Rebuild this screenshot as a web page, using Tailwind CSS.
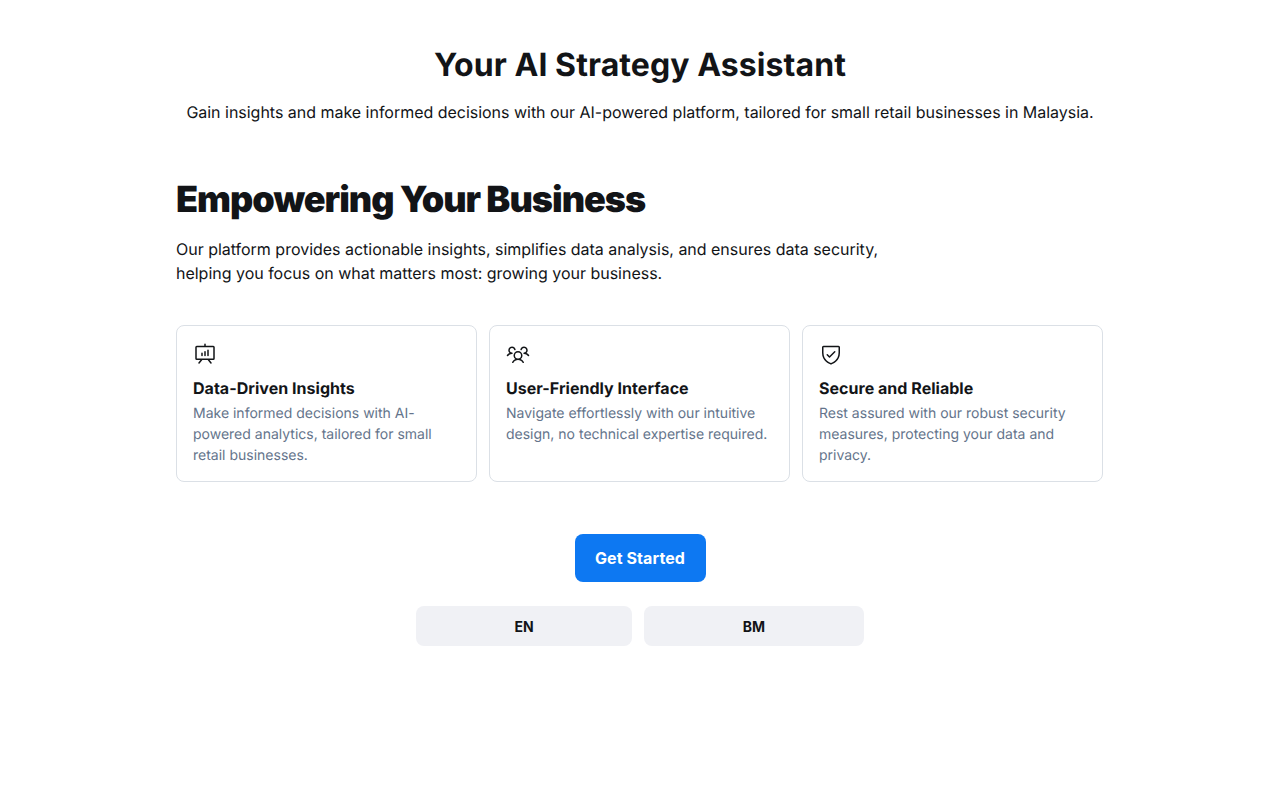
<!DOCTYPE html>
<html lang="en">
<head>
<meta charset="utf-8">
<title>AI Strategy Assistant</title>
<script src="https://cdn.jsdelivr.net/npm/@tailwindcss/browser@4"></script>
</head>
<body class="bg-white font-['Inter','Noto_Sans',sans-serif] text-[#121417] antialiased [text-rendering:geometricPrecision]">
<div class="flex min-h-screen flex-col overflow-x-hidden">
<div class="flex flex-1 justify-center px-40 py-5">
<div class="flex max-w-[960px] flex-1 flex-col">
<h1 class="px-4 pt-[25px] pb-[11px] text-center text-[32px] leading-tight font-bold tracking-[0.08px]">Your AI Strategy Assistant</h1>
<p class="px-4 pt-1 pb-3 text-center text-base leading-normal tracking-[-0.02px]">Gain insights and make informed decisions with our AI-powered platform, tailored for small retail businesses in Malaysia.</p>
<section class="flex flex-col gap-10 px-4 pt-[41px] pb-10">
<div class="flex flex-col gap-[15px]">
<h2 class="max-w-[720px] text-4xl leading-tight font-black tracking-[-0.99px]">Empowering Your Business</h2>
<p class="max-w-[720px] text-base leading-normal tracking-[-0.015px]">Our platform provides actionable insights, simplifies data analysis, and ensures data security, helping you focus on what matters most: growing your business.</p>
</div>
<div class="grid grid-cols-[301px_301px_301px] gap-3">
<article class="flex flex-col gap-3 rounded-lg border border-[#dbe0e6] bg-white px-4 pt-4 pb-[15px]">
<svg class="size-6" viewBox="0 0 256 256" fill="currentColor"><path d="M216,40H136V24a8,8,0,0,0-16,0V40H40A16,16,0,0,0,24,56V176a16,16,0,0,0,16,16H79.36L57.75,219a8,8,0,0,0,12.5,10l29.59-37h56.32l29.59,37a8,8,0,1,0,12.5-10l-21.61-27H216a16,16,0,0,0,16-16V56A16,16,0,0,0,216,40Zm0,136H40V56H216V176ZM104,120v24a8,8,0,0,1-16,0V120a8,8,0,0,1,16,0Zm32-16v40a8,8,0,0,1-16,0V104a8,8,0,0,1,16,0Zm32-16v56a8,8,0,0,1-16,0V88a8,8,0,0,1,16,0Z"/></svg>
<div class="flex flex-col gap-[5px]"><h3 class="text-base leading-tight font-bold tracking-[0.03px]">Data-Driven Insights</h3><p class="text-sm leading-normal text-[#64748b]">Make informed decisions with AI-powered analytics, tailored for small retail businesses.</p></div>
</article>
<article class="flex flex-col gap-3 rounded-lg border border-[#dbe0e6] bg-white px-4 pt-4 pb-[15px]">
<svg class="size-6" viewBox="0 0 256 256" fill="currentColor"><path d="M244.8,150.4a8,8,0,0,1-11.2-1.6A51.6,51.6,0,0,0,192,128a8,8,0,0,1-7.37-4.89,8,8,0,0,1,0-6.22A8,8,0,0,1,192,112a24,24,0,1,0-23.24-30,8,8,0,1,1-15.5-4A40,40,0,1,1,219,117.51a67.94,67.94,0,0,1,27.43,21.68A8,8,0,0,1,244.8,150.4ZM190.92,212a8,8,0,1,1-13.84,8,57,57,0,0,0-98.16,0,8,8,0,1,1-13.84-8,72.06,72.06,0,0,1,33.74-29.92,48,48,0,1,1,58.36,0A72.06,72.06,0,0,1,190.92,212ZM128,176a32,32,0,1,0-32-32A32,32,0,0,0,128,176ZM72,120a8,8,0,0,0-8-8A24,24,0,1,1,87.24,82a8,8,0,1,0,15.5-4A40,40,0,1,0,37,117.51,67.94,67.94,0,0,0,9.6,139.19a8,8,0,1,0,12.8,9.61A51.6,51.6,0,0,1,64,128,8,8,0,0,0,72,120Z"/></svg>
<div class="flex flex-col gap-[5px]"><h3 class="text-base leading-tight font-bold tracking-[0.03px]">User-Friendly Interface</h3><p class="text-sm leading-normal text-[#64748b]">Navigate effortlessly with our intuitive design, no technical expertise required.</p></div>
</article>
<article class="flex flex-col gap-3 rounded-lg border border-[#dbe0e6] bg-white px-4 pt-4 pb-[15px]">
<svg class="size-6" viewBox="0 0 256 256" fill="currentColor"><path d="M208,40H48A16,16,0,0,0,32,56v58.78c0,89.61,75.82,119.34,91,124.39a15.53,15.53,0,0,0,10,0c15.2-5.05,91-34.78,91-124.39V56A16,16,0,0,0,208,40Zm0,74.79c0,78.42-66.35,104.62-80,109.18-13.53-4.51-80-30.69-80-109.18V56H208ZM82.34,141.66a8,8,0,0,1,11.32-11.32L112,148.68l50.34-50.34a8,8,0,0,1,11.32,11.32l-56,56a8,8,0,0,1-11.32,0Z"/></svg>
<div class="flex flex-col gap-[5px]"><h3 class="text-base leading-tight font-bold tracking-[0.03px]">Secure and Reliable</h3><p class="text-sm leading-normal text-[#64748b]">Rest assured with our robust security measures, protecting your data and privacy.</p></div>
</article>
</div>
</section>
<div class="flex justify-center px-4 py-3"><button class="h-12 w-[131px] rounded-lg bg-[#0d78f2] text-base font-bold tracking-[0.08px] text-white">Get Started</button></div>
<div class="flex justify-center"><div class="flex w-[480px] gap-3 px-4 py-3"><button class="h-10 w-[216px] rounded-lg bg-[#f0f1f5] px-4 pt-px text-sm font-bold">EN</button><button class="h-10 w-[220px] rounded-lg bg-[#f0f1f5] px-4 pt-px text-sm font-bold">BM</button></div></div>
</div>
</div>
</div>
</body>
</html>
